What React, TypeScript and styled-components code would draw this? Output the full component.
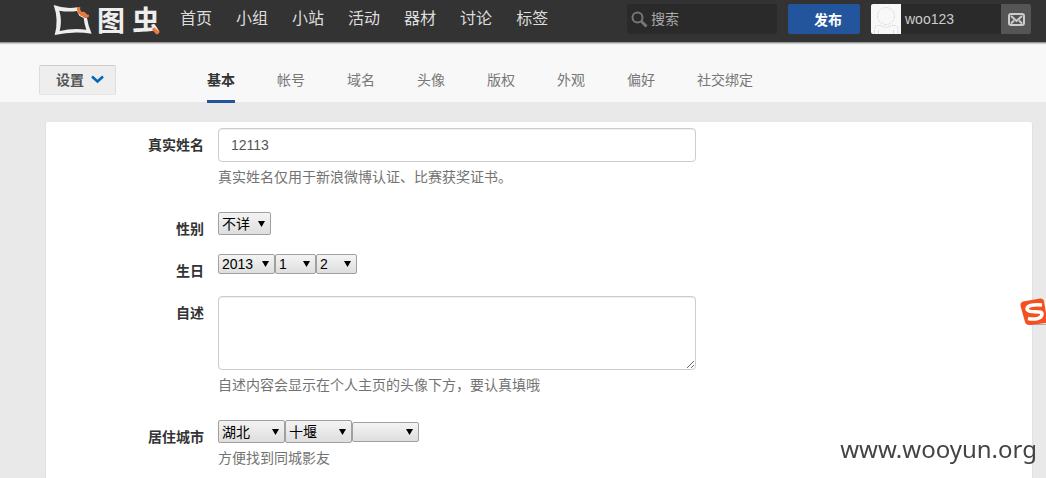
import React from 'react';
import styled, { createGlobalStyle } from 'styled-components';

const GlobalStyle = createGlobalStyle`
  *, *::before, *::after { box-sizing: border-box; }
  body {
    margin: 0;
    background: #e9e9e9;
    color: #333;
    font-family: "Liberation Sans", "Noto Sans CJK SC", sans-serif;
    font-size: 14px;
    line-height: 20px;
  }
  button, input, select, textarea { font-family: inherit; margin: 0; }
  a { color: inherit; text-decoration: none; }
`;

const Page = styled.div`
  display: flex;
  flex-direction: column;
  height: 100vh;
`;

const Header = styled.header`
  display: flex;
  flex: none;
  align-items: flex-start;
  height: 43px;
  padding: 4px 15px 0 53px;
  background: #333;
  border-bottom: 1px solid #999;
  box-shadow: 0 1px 1px #ccc;
  z-index: 1;
`;

const Logo = styled.a`
  display: flex;
  align-items: center;
  height: 32px;
  color: #eee;
`;

const LogoFrame = styled.svg`
  width: 40px;
  height: 32px;
  margin-right: 4px;
`;

const LogoText = styled.span`
  display: flex;
  gap: 7px;
  padding-top: 4px;
  font-size: 28px;
  font-weight: 700;
  line-height: 32px;
`;

const LogoGlyph = styled.span`
  position: relative;
`;

const LogoAccent = styled.svg`
  position: absolute;
  right: 0;
  bottom: 3px;
  width: 9px;
  height: 8px;
`;

const MainNav = styled.nav`
  display: flex;
  gap: 24px;
  margin-left: 20px;
  color: #ddd;
  font-size: 16px;
  line-height: 30px;
  white-space: nowrap;
`;

const Tools = styled.div`
  display: flex;
  gap: 11px;
  margin-left: auto;
`;

const Search = styled.label`
  display: flex;
  align-items: center;
  gap: 3px;
  width: 150px;
  height: 30px;
  padding: 0 4px;
  border-radius: 2px;
  background: #2a2a2a;
`;

const SearchInput = styled.input`
  flex: 1;
  min-width: 0;
  padding: 0;
  border: 0;
  outline: 0;
  background: transparent;
  color: #aaa;
  font-size: 14px;
  &::placeholder { color: #aaa; }
`;

const Publish = styled.button`
  width: 72px;
  height: 30px;
  padding: 0 0 0 8px;
  border: 0;
  border-radius: 2px;
  background: #22559c;
  color: #fff;
  font-size: 14px;
  font-weight: 700;
`;

const Account = styled.div`
  display: flex;
  height: 30px;
  overflow: hidden;
  border-radius: 2px;
  background: #2a2a2a;
`;

const UserLink = styled.a`
  display: flex;
  align-items: center;
  gap: 4px;
  width: 130px;
  color: #ccc;
`;

const MailButton = styled.button`
  display: flex;
  align-items: center;
  justify-content: center;
  width: 30px;
  padding: 0;
  border: 0;
  background: #555;
`;

const SubHeader = styled.div`
  display: flex;
  flex: none;
  height: 59px;
  padding: 0 39px;
  background: #f8f8f8;
`;

const SettingsButton = styled.button`
  display: flex;
  align-items: center;
  gap: 7px;
  width: 77px;
  height: 30px;
  margin-top: 22px;
  padding: 0 0 2px 16px;
  border: 1px solid #ddd;
  border-top-color: #ccc;
  border-bottom-color: #e5e5e5;
  border-radius: 2px;
  background: #eee;
  color: #555;
  font-size: 14px;
  font-weight: 700;
`;

const Tabs = styled.nav`
  display: flex;
  gap: 42px;
  margin-left: 91px;
  white-space: nowrap;
`;

const Tab = styled.a<{ $active?: boolean }>`
  height: 60px;
  padding-top: 27px;
  border-bottom: 3px solid ${p => (p.$active ? '#22559c' : 'transparent')};
  color: ${p => (p.$active ? '#333' : '#777')};
  font-weight: ${p => (p.$active ? 700 : 400)};
`;

const Card = styled.main`
  flex: 1;
  min-height: 0;
  margin: 20px 14px 0 46px;
  padding: 6px 16px 0;
  border-radius: 2px 2px 0 0;
  background: #fff;
  box-shadow: 0 1px 2px #ccc;
  overflow: hidden;
`;

const Row = styled.div`
  display: grid;
  grid-template-columns: 142px minmax(0, 478px);
  column-gap: 14px;
  align-items: start;
  margin-bottom: 15px;
`;

const Label = styled.label`
  padding-top: 7px;
  color: #333;
  font-weight: 700;
  text-align: right;
`;

const TextInput = styled.input`
  display: block;
  width: 100%;
  height: 34px;
  padding: 6px 12px;
  border: 1px solid #ccc;
  border-radius: 4px;
  background: #fff;
  box-shadow: inset 0 1px 1px #eee;
  color: #555;
  font-size: 14px;
`;

const TextArea = styled.textarea`
  display: block;
  width: 100%;
  height: 74px;
  padding: 6px 12px;
  border: 1px solid #ccc;
  border-radius: 4px;
  background: #fff;
  box-shadow: inset 0 1px 1px #eee;
  color: #555;
  font-size: 14px;
  resize: vertical;
`;

const Help = styled.p`
  margin: 5px 0 10px;
  color: #737373;
`;

const SelectGroup = styled.div`
  display: flex;
  align-items: center;
`;

const SelectBox = styled.div`
  position: relative;
`;

const SelectControl = styled.select<{ $width: number; $tall?: boolean }>`
  display: block;
  appearance: none;
  width: ${p => p.$width}px;
  height: ${p => (p.$tall ? 23 : 20)}px;
  padding: 0 14px 0 3px;
  border: 1px solid #a0a0a0;
  border-radius: 2px;
  background: linear-gradient(#f4f4f4, #dedede);
  color: #000;
  font-size: 14px;
`;

const SelectArrow = styled.svg`
  position: absolute;
  right: 6px;
  top: calc(50% - 3px);
  width: 7px;
  height: 6px;
  pointer-events: none;
`;

const Watermark = styled.div`
  position: fixed;
  right: 9px;
  bottom: 12px;
  color: #444;
  font-family: "Noto Sans", sans-serif;
  font-size: 24px;
  line-height: 34px;
`;

const InputBadge = styled.svg`
  position: fixed;
  right: 0;
  top: 296px;
  width: 26px;
  height: 31px;
`;

type SelectProps = { name: string; options: string[]; width: number; tall?: boolean; id?: string };

function Select({ name, options, width, tall, id }: SelectProps) {
  return (
    <SelectBox>
      <SelectControl id={id} aria-label={name} $width={width} $tall={tall}>
        {options.map(o => <option key={o}>{o}</option>)}
      </SelectControl>
      <SelectArrow viewBox="0 0 7 6" aria-hidden="true"><path d="M0 0H7L3.5 6Z" fill="#000" /></SelectArrow>
    </SelectBox>
  );
}

const navItems = ['首页', '小组', '小站', '活动', '器材', '讨论', '标签'];
const tabItems = ['基本', '帐号', '域名', '头像', '版权', '外观', '偏好', '社交绑定'];

export default function App() {
  return (
    <>
      <GlobalStyle />
      <Page>
        <Header>
          <Logo href="#">
            <LogoFrame viewBox="40 12 120 96" aria-hidden="true">
              <path fill="#eee" fillRule="evenodd" d="M42 15Q78 28 113 22L116 38L132 51L142 54Q146 80 156 101Q100 92 45 105Q58 60 42 15ZM59 32Q86 37 112 33L119 47L132 54Q134 74 140 89Q100 83 60 93Q68 62 59 32Z" />
              <path fill="#e8793a" d="M112 22L122 21Q119 32 128 36Q134 34 138 39Q140 45 148 44L147 52L136 54Q131 51 130 48Q120 48 119 41Q111 36 112 22Z" />
            </LogoFrame>
            <LogoText>
              <span>图</span>
              <LogoGlyph>
                虫
                <LogoAccent viewBox="0 0 9 8" aria-hidden="true"><path d="M2 1.500L7.500 6.500" stroke="#e8793a" strokeWidth="3.500" /></LogoAccent>
              </LogoGlyph>
            </LogoText>
          </Logo>
          <MainNav>
            {navItems.map(n => <a key={n} href="#">{n}</a>)}
          </MainNav>
          <Tools>
            <Search>
              <svg width="17" height="17" viewBox="0 0 17 17" fill="none" stroke="#777" aria-hidden="true">
                <circle cx="6.500" cy="6.500" r="5" strokeWidth="2" />
                <path d="M10.500 10.500L15.500 15.500" strokeWidth="3" />
              </svg>
              <SearchInput type="text" placeholder="搜索" aria-label="搜索" />
            </Search>
            <Publish type="button">发布</Publish>
            <Account>
              <UserLink href="#">
                <svg width="30" height="30" viewBox="0 0 30 30" fill="none" stroke="#ddd" aria-hidden="true">
                  <rect width="30" height="30" fill="#f8f8f8" stroke="none" />
                  <circle cx="15" cy="12" r="8.500" strokeDasharray="3 1" />
                  <path d="M3.500 30V25Q3.500 21.500 7 21.500H10Q15 25 20 21.500H23.500Q27 21.500 27 25V30" strokeDasharray="4 1" />
                  <path d="M7.500 30V26M22.500 30V26" />
                </svg>
                woo123
              </UserLink>
              <MailButton type="button" aria-label="私信">
                <svg width="17" height="13" viewBox="0 0 17 13" fill="none" stroke="#ccc" aria-hidden="true">
                  <rect x="1" y="1" width="15" height="11" rx="2" strokeWidth="2" />
                  <path d="M3 3L8.500 8L14 3M3 10.500L6 7.500M14 10.500L11 7.500" strokeWidth="2" />
                </svg>
              </MailButton>
            </Account>
          </Tools>
        </Header>
        <SubHeader>
          <SettingsButton type="button">
            设置
            <svg width="13" height="9" viewBox="0 0 13 9" fill="none" stroke="#0068b7" strokeWidth="2.500" aria-hidden="true"><path d="M1 1.500L6.500 6.500L12 1.500" /></svg>
          </SettingsButton>
          <Tabs>
            {tabItems.map((t, i) => <Tab key={t} href="#" $active={i === 0}>{t}</Tab>)}
          </Tabs>
        </SubHeader>
        <Card>
          <Row>
            <Label htmlFor="name">真实姓名</Label>
            <div>
              <TextInput id="name" type="text" defaultValue="12113" />
              <Help>真实姓名仅用于新浪微博认证、比赛获奖证书。</Help>
            </div>
          </Row>
          <Row>
            <Label htmlFor="gender">性别</Label>
            <SelectGroup>
              <Select id="gender" name="性别" options={['不详', '男', '女']} width={53} tall />
            </SelectGroup>
          </Row>
          <Row>
            <Label htmlFor="year">生日</Label>
            <SelectGroup>
              <Select id="year" name="年" options={['2013', '2012']} width={57} />
              <Select name="月" options={['1', '2', '3']} width={41} />
              <Select name="日" options={['2', '3', '4']} width={41} />
            </SelectGroup>
          </Row>
          <Row>
            <Label htmlFor="about">自述</Label>
            <div>
              <TextArea id="about" />
              <Help>自述内容会显示在个人主页的头像下方，要认真填哦</Help>
            </div>
          </Row>
          <Row>
            <Label htmlFor="province">居住城市</Label>
            <div>
              <SelectGroup>
                <Select id="province" name="省份" options={['湖北']} width={67} tall />
                <Select name="城市" options={['十堰']} width={67} tall />
                <Select name="区县" options={['']} width={67} />
              </SelectGroup>
              <Help>方便找到同城影友</Help>
            </div>
          </Row>
        </Card>
      </Page>
      <InputBadge viewBox="0 0 26 31" aria-hidden="true">
        <path d="M8 6H26V28H8Z" fill="#fafafa" />
        <path d="M10 28.500H26" stroke="#aaa" />
        <path d="M3 5.500L20 2.500Q23.500 2 24 5L26 17V27L10 29Q6 29.500 5 26L0.500 10Q0 6.500 3 5.500Z" fill="#f4511e" />
        <path d="M22 9Q7 8 7 13C8 18 22 13.500 22 18C22 23.500 13 23.500 8 22.500" fill="none" stroke="#fff" strokeWidth="3.500" />
      </InputBadge>
      <Watermark>www.wooyun.org</Watermark>
    </>
  );
}
